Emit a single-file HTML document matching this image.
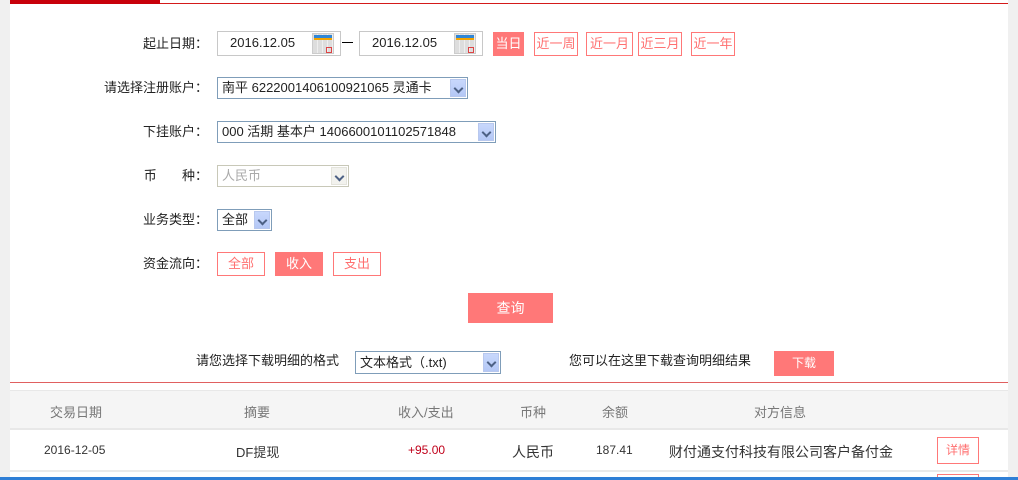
<!DOCTYPE html>
<html><head><meta charset="utf-8"><style>
*{margin:0;padding:0;box-sizing:border-box}
body{width:1018px;height:480px;overflow:hidden;background:#f0f0f0;position:relative;font-family:"Liberation Sans","Noto Sans CJK SC","WenQuanYi Zen Hei",sans-serif;font-size:13px;color:#222}
.a{position:absolute;white-space:nowrap}
.lbl{position:absolute;text-align:right;width:200px;left:8px;font-size:13px;line-height:16px}
.inp{position:absolute;border:1px solid #c8c8c8;background:#fff;font-size:13px;line-height:22px;padding-left:12px}
.sel{position:absolute;border:1px solid #7f9db9;background:#fff;font-size:13px;padding-left:4px}
.arr{position:absolute;right:1px;top:1px;bottom:1px;width:16px;background:linear-gradient(#c8d8fc,#b4c8f6);border:1px solid #b8c8ee}
.arr:after{content:"";position:absolute;left:4px;top:5px;width:5px;height:5px;border-right:2px solid #4d6185;border-bottom:2px solid #4d6185;transform:rotate(45deg)}
.btn{position:absolute;border:1px solid #ff7878;color:#ff7070;text-align:center;font-size:13px;background:#fff}
.fb{background:#ff7878;color:#fff}
.cal{position:absolute;width:22px;height:21px;background:repeating-linear-gradient(90deg,#ddd 0 4px,#eee 4px 5px);border:1px solid #ccc}
.cal:before{content:"";position:absolute;left:1px;right:1px;top:1px;height:3px;background:#2f86d6;border-bottom:2px solid #f3a300}
.cal:after{content:"";position:absolute;left:13px;top:13px;width:4px;height:4px;border:1px solid #d44}
</style></head><body>
<div class="a" style="left:10px;top:0;width:998px;height:480px;background:#fff"></div>
<div class="a" style="left:10px;top:0;width:150px;height:4px;background:#c8000a"></div>
<div class="a" style="left:160px;top:3px;width:848px;height:1px;background:#d41a1a"></div>

<div class="lbl" style="top:36px">起止日期：</div>
<div class="inp" style="left:217px;top:31px;width:124px;height:25px">2016.12.05</div>
<div class="cal" style="left:312px;top:33px"></div>
<div class="a" style="left:342px;top:42px;width:11px;height:1px;background:#000"></div>
<div class="inp" style="left:359px;top:31px;width:124px;height:25px">2016.12.05</div>
<div class="cal" style="left:454px;top:33px"></div>
<div class="btn fb" style="left:493px;top:32px;width:31px;height:24px;line-height:22px">当日</div>
<div class="btn" style="left:534px;top:32px;width:44px;height:24px;line-height:22px">近一周</div>
<div class="btn" style="left:586px;top:32px;width:47px;height:24px;line-height:22px">近一月</div>
<div class="btn" style="left:638px;top:32px;width:44px;height:24px;line-height:22px">近三月</div>
<div class="btn" style="left:691px;top:32px;width:44px;height:24px;line-height:22px">近一年</div>

<div class="lbl" style="top:80px">请选择注册账户：</div>
<div class="sel" style="left:217px;top:77px;width:251px;height:22px;line-height:20px">南平 6222001406100921065 灵通卡<div class="arr"></div></div>

<div class="lbl" style="top:124px">下挂账户：</div>
<div class="sel" style="left:217px;top:121px;width:279px;height:22px;line-height:20px">000 活期 基本户 1406600101102571848<div class="arr"></div></div>

<div class="lbl" style="top:168px">币&nbsp;&nbsp;&nbsp;&nbsp;&nbsp;&nbsp;&nbsp;种：</div>
<div class="sel" style="left:217px;top:165px;width:132px;height:22px;line-height:20px;border-color:#c8c8b8;color:#aaa">人民币<div class="arr" style="background:#f2f2ee;border-color:#e4e4dc"></div></div>

<div class="lbl" style="top:212px">业务类型：</div>
<div class="sel" style="left:217px;top:209px;width:55px;height:22px;line-height:20px">全部<div class="arr"></div></div>

<div class="lbl" style="top:256px">资金流向：</div>
<div class="btn" style="left:217px;top:252px;width:48px;height:24px;line-height:22px">全部</div>
<div class="btn fb" style="left:275px;top:252px;width:48px;height:24px;line-height:22px">收入</div>
<div class="btn" style="left:333px;top:252px;width:48px;height:24px;line-height:22px">支出</div>

<div class="btn fb" style="left:468px;top:293px;width:85px;height:30px;line-height:28px;font-size:14px">查询</div>

<div class="a" style="left:0;top:344px;width:10px;height:136px;background:#f0f0f0"></div>
<div class="a" style="left:196px;top:353px;line-height:16px">请您选择下载明细的格式</div>
<div class="sel" style="left:355px;top:351px;width:146px;height:23px;line-height:21px">文本格式（.txt)<div class="arr"></div></div>
<div class="a" style="left:569px;top:353px;line-height:16px">您可以在这里下载查询明细结果</div>
<div class="btn fb" style="left:774px;top:351px;width:60px;height:25px;line-height:23px;font-size:12px">下载</div>
<div class="a" style="left:10px;top:382px;width:998px;height:1px;background:#e06060"></div>

<div class="a" style="left:10px;top:390px;width:998px;height:40px;background:#f5f5f5;border-top:1px solid #e8e8e8;border-bottom:2px solid #e8e8e8"></div>
<div class="a" style="top:402px;left:50px;color:#777">交易日期</div>
<div class="a" style="top:402px;left:244px;color:#777">摘要</div>
<div class="a" style="top:402px;left:398px;color:#777">收入/支出</div>
<div class="a" style="top:402px;left:520px;color:#777">币种</div>
<div class="a" style="top:402px;left:602px;color:#777">余额</div>
<div class="a" style="top:402px;left:754px;color:#777">对方信息</div>

<div class="a" style="top:443px;left:44px;font-size:12px;color:#333">2016-12-05</div>
<div class="a" style="top:442px;left:236px;color:#333">DF提现</div>
<div class="a" style="top:443px;left:408px;font-size:12px;color:#c0001a">+95.00</div>
<div class="a" style="top:442px;left:512px;color:#333;font-size:14px">人民币</div>
<div class="a" style="top:443px;left:596px;font-size:12px;color:#333">187.41</div>
<div class="a" style="top:442px;left:669px;color:#333;font-size:14px">财付通支付科技有限公司客户备付金</div>
<div class="btn" style="left:937px;top:437px;width:42px;height:27px;line-height:25px;font-size:12px">详情</div>
<div class="a" style="left:10px;top:470px;width:998px;height:2px;background:#eaeaea"></div>
<div class="a" style="left:937px;top:474px;width:42px;height:3px;border:1px solid #ff7878;border-bottom:0"></div>
<div class="a" style="left:0;top:477px;width:1018px;height:3px;background:#2f7fd6"></div>
</body></html>
